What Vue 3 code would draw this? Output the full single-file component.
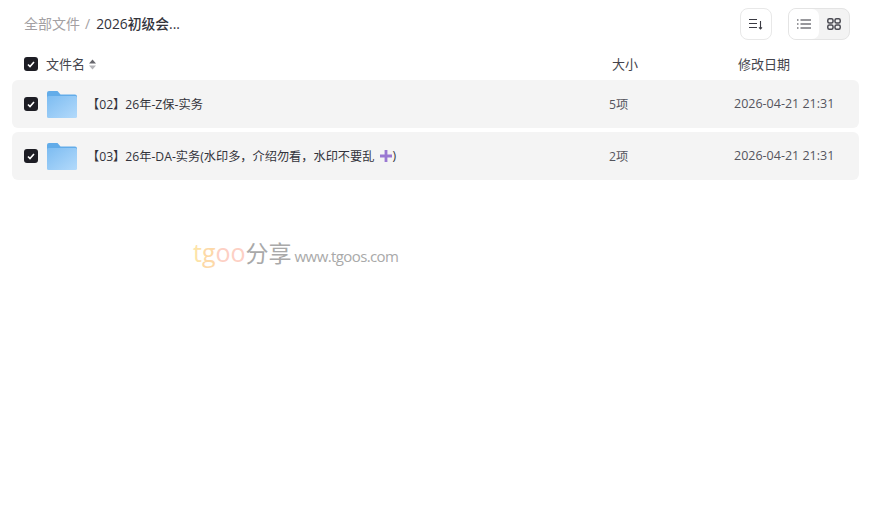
<template>
  <div class="page">
    <!-- 顶部:面包屑和视图切换 -->
    <div class="topbar">
      <div class="crumbs">
        <span class="crumb-root">全部文件</span>
        <span class="crumb-sep">/</span>
        <span class="crumb-current">2026初级会...</span>
      </div>
      <div class="tools">
        <button class="tool-btn">
          <svg width="14" height="12" viewBox="0 0 14 12" fill="none" stroke="#3a3a42" stroke-width="1.1">
            <path d="M0 1.500h8M0 5.500h8M0 9.500h8" />
            <path d="M11.500 3v8M10 9.400l1.500 1.600 1.500-1.600" />
          </svg>
        </button>
        <div class="view-switch">
          <button class="view-btn active">
            <svg width="14" height="10" viewBox="0 0 14 10" fill="none" stroke="#33333b" stroke-width="1.200">
              <path d="M3.500 1H14M3.500 5H14M3.500 9H14M0 1h1.500M0 5h1.500M0 9h1.500" />
            </svg>
          </button>
          <button class="view-btn">
            <svg width="14" height="12" viewBox="0 0 14 12" fill="none" stroke="#4a4a52" stroke-width="1.500">
              <rect x="0.800" y="0.800" width="5.200" height="4.200" rx="1.500" />
              <rect x="8" y="0.800" width="5.200" height="4.200" rx="1.500" />
              <rect x="0.800" y="7" width="5.200" height="4.200" rx="1.500" />
              <rect x="8" y="7" width="5.200" height="4.200" rx="1.500" />
            </svg>
          </button>
        </div>
      </div>
    </div>

    <!-- 表头 -->
    <div class="head">
      <span class="check">
        <svg width="8" height="7" viewBox="0 0 8 7" fill="none" stroke="#fff" stroke-width="1.600"><path d="M1 3.500l2 2 4-4.500" /></svg>
      </span>
      <span class="head-name">文件名</span>
      <svg class="sort" width="7" height="11" viewBox="0 0 7 11">
        <path d="M3.500 0.500L7 4.500H0z" fill="#66666c" />
        <path d="M3.500 10.500L0 6.500h7z" fill="#b4b4b8" />
      </svg>
      <span class="head-size">大小</span>
      <span class="head-date">修改日期</span>
    </div>

    <!-- 文件列表 -->
    <div class="list">
      <div v-for="file in files" :key="file.name" class="row">
        <span class="check">
          <svg width="8" height="7" viewBox="0 0 8 7" fill="none" stroke="#fff" stroke-width="1.600"><path d="M1 3.500l2 2 4-4.500" /></svg>
        </span>
        <svg class="folder" width="30" height="27" viewBox="0 0 30 27">
          <path d="M0 2A2 2 0 0 1 2 0h8.500l3 3.500H28a2 2 0 0 1 2 2V12H0z" fill="#62ace9" />
          <rect x="0" y="5" width="30" height="22" rx="1.500" fill="url(#folderFill)" />
          <defs>
            <linearGradient id="folderFill" x1="0" y1="0" x2="1" y2="1">
              <stop offset="0" stop-color="#7dbcf1" />
              <stop offset="1" stop-color="#b3dafb" />
            </linearGradient>
          </defs>
        </svg>
        <span class="name">
          {{ file.name }}
          <svg v-if="file.plus" class="plus" width="14" height="14" viewBox="0 0 14 14">
            <path d="M5.600 1h2.800v4.600H13v2.800H8.400V13H5.600V8.400H1V5.600h4.600z" fill="#9a78d2" />
          </svg>
          <template v-if="file.plus">)</template>
        </span>
        <span class="size">{{ file.size }}</span>
        <span class="date">{{ file.date }}</span>
      </div>
    </div>

    <!-- 水印 -->
    <div class="watermark">
      <span class="wm-logo"><span class="wm-t">t</span><span class="wm-g">g</span><span class="wm-o">oo</span></span>
      <span class="wm-cn">分享</span>
      <span class="wm-url">www.tgoos.com</span>
    </div>
  </div>
</template>

<script setup>
import { ref } from 'vue'

const files = ref([
  { name: '【02】26年-Z保-实务', size: '5项', date: '2026-04-21 21:31' },
  { name: '【03】26年-DA-实务(水印多\uFF0C介绍勿看\uFF0C水印不要乱', plus: true, size: '2项', date: '2026-04-21 21:31' },
])
</script>

<style>
html,
body {
  background: #fff;
}
</style>

<style scoped>
.page {
  position: relative;
  width: 874px;
  height: 514px;
  overflow: hidden;
  background: #fff;
  color: #33333b;
  font-family: "Open Sans", "Noto Sans CJK SC", sans-serif;
  font-size: 13px;
}

.topbar {
  display: flex;
  align-items: center;
  justify-content: space-between;
  height: 48px;
  padding: 0 24px;
}
.crumbs {
  display: flex;
  align-items: center;
  margin-top: -2px;
  font-size: 14px;
}
.crumb-root {
  color: #a3a0a3;
}
.crumb-sep {
  margin: 0 6px 0 5px;
  color: #a3a0a3;
}
.crumb-current {
  color: #33333b;
  font-size: 13.800px;
  font-weight: 500;
}
.tools {
  display: flex;
  gap: 16px;
}
.tool-btn {
  display: flex;
  align-items: center;
  justify-content: center;
  width: 32px;
  height: 32px;
  padding: 0;
  background: #fff;
  border: 1px solid #e8e8e8;
  border-radius: 8px;
}
.view-switch {
  display: flex;
  height: 32px;
  overflow: hidden;
  background: #f3f3f3;
  border: 1px solid #e4e4e4;
  border-radius: 8px;
  box-sizing: border-box;
}
.view-btn {
  display: flex;
  align-items: center;
  justify-content: center;
  width: 30px;
  padding: 0;
  background: transparent;
  border: 0;
}
.view-btn.active {
  background: #fff;
  border-radius: 0 7px 7px 0;
}

.head {
  display: flex;
  align-items: center;
  height: 32px;
  padding-left: 24px;
  font-size: 13px;
  color: #44444c;
}
.head-name {
  margin-left: 8px;
  margin-top: -2px;
}
.sort {
  margin-left: 4px;
}
.head-size {
  margin-left: 516px;
  margin-top: -2px;
}
.head-date {
  margin-left: 100px;
  margin-top: -2px;
}

.check {
  display: flex;
  flex: none;
  align-items: center;
  justify-content: center;
  width: 14px;
  height: 14px;
  background: #1d1d24;
  border-radius: 3px;
}

.list {
  display: flex;
  flex-direction: column;
  gap: 4px;
  margin: 0 15px 0 12px;
}
.row {
  display: flex;
  align-items: center;
  height: 48px;
  padding-left: 12px;
  background: #f4f4f4;
  border-radius: 6px;
  font-size: 12.200px;
}
.folder {
  flex: none;
  margin-left: 9px;
  margin-top: 1px;
}
.name {
  display: flex;
  align-items: center;
  flex: none;
  width: 522px;
  margin-top: -1px;
  margin-left: 10px;
  color: #33333b;
  white-space: pre;
}
.plus {
  margin-left: 1px;
}
.size {
  flex: none;
  width: 125px;
  margin-top: -1px;
  color: #55555d;
}
.date {
  margin-top: -1px;
  font-size: 12.500px;
  color: #55555d;
}

.watermark {
  position: absolute;
  left: 193px;
  top: 235px;
  display: flex;
  align-items: baseline;
  white-space: nowrap;
  color: #a9a9a9;
}
.wm-logo {
  font-size: 25px;
  font-family: "Open Sans", sans-serif;
}
.wm-t {
  color: #fde3a8;
}
.wm-g {
  color: #fdd9a8;
}
.wm-o {
  color: #fdd0c4;
}
.wm-cn {
  font-size: 23px;
}
.wm-url {
  margin-left: 3px;
  font-size: 15px;
  letter-spacing: -0.600px;
}
</style>
